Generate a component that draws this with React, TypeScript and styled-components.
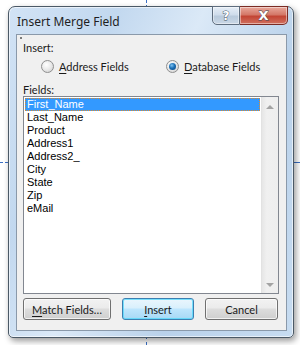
import React from "react";
import styled, { createGlobalStyle } from "styled-components";

const GlobalStyle = createGlobalStyle`
  html, body {
    margin: 0;
    padding: 0;
    background: #ffffff;
  }
  body {
    width: 300px;
    height: 345px;
    overflow: hidden;
    font-family: Lato, "Noto Sans", "DejaVu Sans", sans-serif;
  }
`;

const Desktop = styled.div`
  position: relative;
  width: 300px;
  height: 345px;
  padding: 6px 0 0 8px;
  box-sizing: border-box;
`;

const Guide = styled.div<{ $vertical?: boolean }>`
  position: absolute;
  ${(p) =>
    p.$vertical
      ? `width: 0; border-left: 1px dashed #3a6fc4;`
      : `height: 0; border-top: 1px dashed #3a6fc4;`}
`;

const Window = styled.div`
  position: relative;
  width: 286px;
  height: 332px;
  box-sizing: border-box;
  border: 1px solid #4b5966;
  border-radius: 7px 7px 5px 5px;
  background: linear-gradient(
    115deg,
    #d2e3f5 0%,
    #c2d8ef 25%,
    #dbe9f7 45%,
    #b9d1ea 70%,
    #c7dcf1 100%
  );
  box-shadow: 2px 3px 6px rgba(0, 0, 0, 0.4), inset 0 0 0 1px rgba(255, 255, 255, 0.6);
  display: flex;
  flex-direction: column;
  padding: 0 6px 6px 7px;
`;

const TitleBar = styled.div`
  height: 27px;
  flex: none;
  display: flex;
  align-items: flex-start;
  justify-content: space-between;
`;

const Title = styled.span`
  margin: 7px 0 0 1px;
  font-family: "Noto Sans", "Open Sans", sans-serif;
  font-size: 12px;
  line-height: 15px;
  color: #1e1e1e;
`;

const CaptionButtons = styled.div`
  display: flex;
  margin-top: -1px;
  margin-right: -1px;
`;

const CaptionButton = styled.div<{ $close?: boolean }>`
  height: 19px;
  width: ${(p) => (p.$close ? "48px" : "28px")};
  box-sizing: border-box;
  border: 1px solid ${(p) => (p.$close ? "#7a2b24" : "#5e6d7e")};
  border-left-width: ${(p) => (p.$close ? "0" : "1px")};
  border-radius: ${(p) => (p.$close ? "0 0 5px 0" : "0 0 0 5px")};
  background: ${(p) =>
    p.$close
      ? "linear-gradient(#e9a99c 0%, #d47868 45%, #c34534 55%, #d0705f 100%)"
      : "linear-gradient(#e6eef7 0%, #cfdceb 45%, #b9cadc 55%, #c9d7e6 100%)"};
  box-shadow: inset 0 0 0 1px rgba(255, 255, 255, 0.45);
  display: flex;
  align-items: center;
  justify-content: center;
  font-family: "DejaVu Sans", sans-serif;
  font-weight: bold;
  color: #ffffff;
  font-size: ${(p) => (p.$close ? "13px" : "12px")};
  -webkit-text-stroke: 0.8px #3b4b5c;
  paint-order: stroke fill;
`;

const Client = styled.div`
  flex: 1;
  min-height: 0;
  border: 1px solid #8a99aa;
  background: #f0f0f0;
  display: flex;
  flex-direction: column;
  padding: 0 7px 0 6px;
  font-size: 11px;
  color: #1a1a1a;
`;

const FocusDot = styled.div`
  flex: none;
  width: 2px;
  height: 2px;
  background: #7c7c7c;
  margin: 2px 0 0 -3px;
`;

const Label = styled.div<{ $top: number }>`
  flex: none;
  height: 15px;
  line-height: 15px;
  margin-top: ${(p) => p.$top}px;
`;

const Key = styled.span`
  text-decoration: underline;
  text-underline-offset: 2px;
`;

const RadioRow = styled.div`
  flex: none;
  display: flex;
  align-items: center;
  height: 13px;
  margin-top: 5px;
  padding-left: 18px;
`;

const RadioOption = styled.label<{ $width?: number }>`
  display: flex;
  align-items: center;
  gap: 5px;
  width: ${(p) => (p.$width ? `${p.$width}px` : "auto")};
`;

const RadioCircle = styled.span<{ $checked?: boolean }>`
  width: 13px;
  height: 13px;
  box-sizing: border-box;
  border-radius: 50%;
  border: 1px solid #8f8f8f;
  background: radial-gradient(circle at 40% 35%, #ffffff 0%, #e9e9e9 50%, #c9c9c9 100%);
  display: flex;
  align-items: center;
  justify-content: center;
  &::after {
    content: "";
    display: ${(p) => (p.$checked ? "block" : "none")};
    width: 7px;
    height: 7px;
    border-radius: 50%;
    background: radial-gradient(circle at 40% 35%, #7fc3f2 0%, #1b6fb6 45%, #0a3f78 100%);
  }
`;

const ListBox = styled.div`
  flex: none;
  height: 198px;
  margin-top: -1px;
  border: 1px solid #828790;
  background: #ffffff;
  display: flex;
  box-sizing: border-box;
`;

const Items = styled.div`
  flex: 1;
  padding: 1px 1px 0 1px;
  display: flex;
  flex-direction: column;
  font-family: "Liberation Sans", Arial, sans-serif;
  font-size: 11px;
`;

const Item = styled.div<{ $selected?: boolean }>`
  height: 13px;
  line-height: 13px;
  padding-left: 2px;
  box-sizing: border-box;
  color: ${(p) => (p.$selected ? "#ffffff" : "#000000")};
  background: ${(p) => (p.$selected ? "#3399ff" : "transparent")};
  outline: ${(p) => (p.$selected ? "1px dotted #e08a2a" : "none")};
  outline-offset: -1px;
`;

const ScrollBar = styled.div`
  width: 17px;
  background: linear-gradient(90deg, #e6e6e6, #f0f0f0 30%, #eeeeee);
  border-left: 1px solid #e2e2e2;
  display: flex;
  flex-direction: column;
  justify-content: space-between;
  align-items: center;
  padding: 8px 0 6px;
  box-sizing: border-box;
`;

const Arrow = styled.div<{ $down?: boolean }>`
  width: 0;
  height: 0;
  border-left: 4px solid transparent;
  border-right: 4px solid transparent;
  ${(p) =>
    p.$down ? "border-top: 4px solid #a3a3a3;" : "border-bottom: 4px solid #a3a3a3;"}
`;

const ButtonRow = styled.div`
  flex: none;
  display: flex;
  margin-top: 4px;
  gap: 11px;
`;

const Button = styled.div<{ $width: number; $default?: boolean }>`
  width: ${(p) => p.$width}px;
  height: 22px;
  box-sizing: border-box;
  border: 1px solid ${(p) => (p.$default ? "#3c7fb1" : "#707070")};
  border-radius: 3px;
  background: ${(p) =>
    p.$default
      ? "linear-gradient(#eaf6fd 0%, #d9f0fc 45%, #bee6fd 50%, #a7d9f5 100%)"
      : "linear-gradient(#f2f2f2 0%, #ebebeb 45%, #dddddd 50%, #cfcfcf 100%)"};
  box-shadow: inset 0 0 0 1px
    ${(p) => (p.$default ? "rgba(72, 215, 251, 0.7)" : "rgba(255, 255, 255, 0.7)")};
  display: flex;
  align-items: center;
  justify-content: center;
  font-size: 11px;
  color: #1a1a1a;
`;

const fields = [
  "First_Name",
  "Last_Name",
  "Product",
  "Address1",
  "Address2_",
  "City",
  "State",
  "Zip",
  "eMail",
];

export default function App() {
  return (
    <>
      <GlobalStyle />
      <Desktop>
        <Guide $vertical style={{ left: 146, top: 0, height: 18 }} />
        <Guide $vertical style={{ left: 146, top: 336, height: 9 }} />
        <Guide style={{ left: 0, top: 162, width: 8 }} />
        <Guide style={{ left: 294, top: 162, width: 6 }} />
        <Window>
          <TitleBar>
            <Title>Insert Merge Field</Title>
            <CaptionButtons>
              <CaptionButton>?</CaptionButton>
              <CaptionButton $close>X</CaptionButton>
            </CaptionButtons>
          </TitleBar>
          <Client>
            <FocusDot />
            <Label $top={1}>Insert:</Label>
            <RadioRow>
              <RadioOption $width={125}>
                <RadioCircle />
                <span>
                  <Key>A</Key>ddress Fields
                </span>
              </RadioOption>
              <RadioOption>
                <RadioCircle $checked />
                <span>
                  <Key>D</Key>atabase Fields
                </span>
              </RadioOption>
            </RadioRow>
            <Label $top={9}>
              <Key>F</Key>ields:
            </Label>
            <ListBox>
              <Items>
                {fields.map((f, i) => (
                  <Item key={f} $selected={i === 0}>
                    {f}
                  </Item>
                ))}
              </Items>
              <ScrollBar>
                <Arrow />
                <Arrow $down />
              </ScrollBar>
            </ListBox>
            <ButtonRow>
              <Button $width={88}>
                <span>
                  <Key>M</Key>atch Fields…
                </span>
              </Button>
              <Button $width={72} $default>
                <span>
                  <Key>I</Key>nsert
                </span>
              </Button>
              <Button $width={73}>Cancel</Button>
            </ButtonRow>
          </Client>
        </Window>
      </Desktop>
    </>
  );
}
